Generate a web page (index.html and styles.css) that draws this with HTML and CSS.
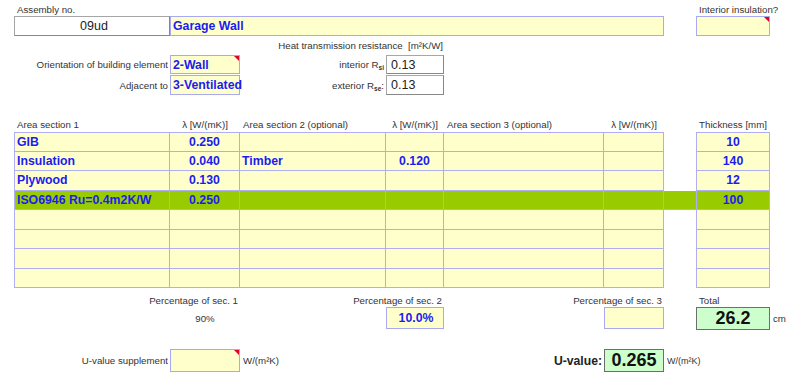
FILE: index.html
```html
<!DOCTYPE html>
<html>
<head>
<meta charset="utf-8">
<link rel="stylesheet" href="styles.css">
</head>
<body>
<div class="sheet">
  <div class="row r-top">
    <div class="lbl left span7">Assembly no.</div>
    <div class="lbl left col-h">Interior insulation?</div>
  </div>
  <div class="row r-box">
    <div class="box white center big">09ud</div>
    <div class="box yellow val span5">Garage Wall</div>
    <div></div>
    <div class="box yellow flag"></div>
  </div>
  <div class="row r-heat">
    <div class="lbl right span4">Heat transmission resistance&nbsp; [m²K/W]</div>
  </div>
  <div class="row r-mid">
    <div class="lbl right">Orientation of building element</div>
    <div class="box yellow val flag">2-Wall</div>
    <div class="lbl right"><span>interior R<sub>si</sub></span></div>
    <div class="box white big">0.13</div>
  </div>
  <div class="row r-mid2">
    <div class="lbl right">Adjacent to</div>
    <div class="box yellow val">3-Ventilated</div>
    <div class="lbl right"><span>exterior R<sub>se</sub>:</span></div>
    <div class="box white big">0.13</div>
  </div>

  <div class="row r-head">
    <div class="lbl left">Area section 1</div>
    <div class="lbl center">λ [W/(mK)]</div>
    <div class="lbl left">Area section 2 (optional)</div>
    <div class="lbl center">λ [W/(mK)]</div>
    <div class="lbl left">Area section 3 (optional)</div>
    <div class="lbl center">λ [W/(mK)]</div>
    <div></div>
    <div class="lbl center">Thickness [mm]</div>
  </div>

  <div class="table">
    <div class="row trow first">
      <div class="c v">GIB</div><div class="c v center">0.250</div><div class="c"></div><div class="c"></div><div class="c"></div><div class="c"></div><div class="gap"></div><div class="c th v center">10</div>
    </div>
    <div class="row trow">
      <div class="c v">Insulation</div><div class="c v center">0.040</div><div class="c v">Timber</div><div class="c v center">0.120</div><div class="c"></div><div class="c"></div><div class="gap"></div><div class="c th v center">140</div>
    </div>
    <div class="row trow">
      <div class="c v">Plywood</div><div class="c v center">0.130</div><div class="c"></div><div class="c"></div><div class="c"></div><div class="c"></div><div class="gap"></div><div class="c th v center">12</div>
    </div>
    <div class="row trow green">
      <div class="c v">ISO6946 Ru=0.4m2K/W</div><div class="c v center">0.250</div><div class="c"></div><div class="c"></div><div class="c"></div><div class="c"></div><div class="gap"></div><div class="c th v center">100</div>
    </div>
    <div class="row trow">
      <div class="c"></div><div class="c"></div><div class="c"></div><div class="c"></div><div class="c"></div><div class="c"></div><div class="gap"></div><div class="c th"></div>
    </div>
    <div class="row trow">
      <div class="c"></div><div class="c"></div><div class="c"></div><div class="c"></div><div class="c"></div><div class="c"></div><div class="gap"></div><div class="c th"></div>
    </div>
    <div class="row trow">
      <div class="c"></div><div class="c"></div><div class="c"></div><div class="c"></div><div class="c"></div><div class="c"></div><div class="gap"></div><div class="c th"></div>
    </div>
    <div class="row trow">
      <div class="c"></div><div class="c"></div><div class="c"></div><div class="c"></div><div class="c"></div><div class="c"></div><div class="gap"></div><div class="c th"></div>
    </div>
  </div>

  <div class="row r-plbl">
    <div class="lbl right span2">Percentage of sec. 1</div>
    <div class="lbl right span2">Percentage of sec. 2</div>
    <div class="lbl right span2">Percentage of sec. 3</div>
    <div></div>
    <div class="lbl left">Total</div>
  </div>
  <div class="row r-pval">
    <div></div>
    <div class="lbl center pct">90%</div>
    <div></div>
    <div class="box yellow val center">10.0%</div>
    <div></div>
    <div class="box yellow"></div>
    <div></div>
    <div class="box result">26.2</div>
    <div class="lbl left unit-cm">cm</div>
  </div>
  <div class="row r-u">
    <div class="lbl right">U-value supplement</div>
    <div class="box yellow flag"></div>
    <div class="lbl left unit">W/(m²K)</div>
    <div></div>
    <div class="ulbl">U-value:</div>
    <div class="box result">0.265</div>
    <div class="lbl left unit small span2">W/(m²K)</div>
  </div>
</div>
</body>
</html>
```
FILE: styles.css
```css
* { box-sizing: border-box; }
body {
  margin: 0;
  background: #fff;
  font-family: "Liberation Sans", Arial, sans-serif;
  color: #333;
}
.sheet {
  padding-left: 14px;
  width: 800px;
}
.row {
  display: grid;
  grid-template-columns: 156px 70px 146px 58px 160px 60px 32px 74px 30px;
}
.span2 { grid-column: span 2; }
.span4 { grid-column: span 4; }
.span5 { grid-column: span 5; }
.span7 { grid-column: span 7; }
.col-h { grid-column: 8; }

.lbl {
  font-size: 9.7px;
  display: flex;
  align-items: center;
  white-space: nowrap;
}
.lbl.left { justify-content: flex-start; padding-left: 3px; }
.lbl.right { justify-content: flex-end; padding-right: 2px; }
.lbl.center { justify-content: center; }
.lbl sub { font-size: 6.5px; font-weight: bold; vertical-align: -2px; line-height: 0; }

.r-top { height: 16px; }
.r-top .lbl { align-items: flex-end; padding-bottom: 1px; }
.r-box { height: 20px; }
.r-heat { height: 19px; }
.r-heat .lbl { padding-right: 1px; }
.r-mid { height: 19px; }
.r-mid2 { height: 20px; margin-top: 1px; }
.r-head { height: 21px; margin-top: 16px; }
.r-head .lbl { align-items: flex-end; padding-bottom: 2px; }

.box {
  border: 1px solid #a9a9f2;
  display: flex;
  align-items: center;
  position: relative;
  white-space: nowrap;
}
.box.white { background: #fff; border-color: #a6a6a6; border-right-color: #888; border-bottom-color: #888; }
.box.yellow { background: #ffffcc; }
.box.center { justify-content: center; }
.big { font-size: 12.5px; color: #222; padding-left: 4px; }
.val {
  font-size: 12.3px;
  font-weight: bold;
  color: #1c1cf2;
  padding-left: 2px;
}
.flag::after {
  content: "";
  position: absolute;
  top: 0;
  right: 0;
  border-style: solid;
  border-width: 0 5px 5px 0;
  border-color: transparent #e0002a transparent transparent;
}

.trow { height: 19.5px; }
.c {
  background: #ffffcc;
  border-right: 1px solid #aeaef0;
  border-bottom: 1px solid #aeaef0;
  display: flex;
  align-items: center;
  white-space: nowrap;
}
.trow > .c:first-child { border-left: 1px solid #aeaef0; }
.trow.first > .c { border-top: 1px solid #aeaef0; }
.c.th { border-left: 1px solid #aeaef0; }
.c.v {
  font-size: 12.3px;
  font-weight: bold;
  color: #1c1cf2;
  padding-left: 2px;
}
.c.center { justify-content: center; padding-left: 0; }
.gap { background: #fff; }
.trow.green > .c, .trow.green > .gap { background: #99cc00; }
.trow.green > .gap { border-bottom: 1px solid #aeaef0; }

.r-plbl { height: 19px; }
.r-plbl .lbl { align-items: center; padding-top: 6px; }
.r-pval { height: 23px; }
.r-pval .box.yellow { height: 22px; }
.result {
  background: #ccffcc;
  border: 1px solid #6e6e6e;
  justify-content: center;
  font-size: 18px;
  font-weight: bold;
  color: #111;
}
.unit-cm { padding-left: 3px; }

.r-u { height: 23px; margin-top: 19px; }
.r-u .box.yellow { height: 23px; }
.unit { padding-left: 2px; }
.unit.small { font-size: 9px; }
.ulbl {
  grid-column: 5;
  display: flex;
  align-items: center;
  justify-content: flex-end;
  padding-right: 2px;
  font-size: 12.2px;
  font-weight: bold;
  color: #222;
}
```
